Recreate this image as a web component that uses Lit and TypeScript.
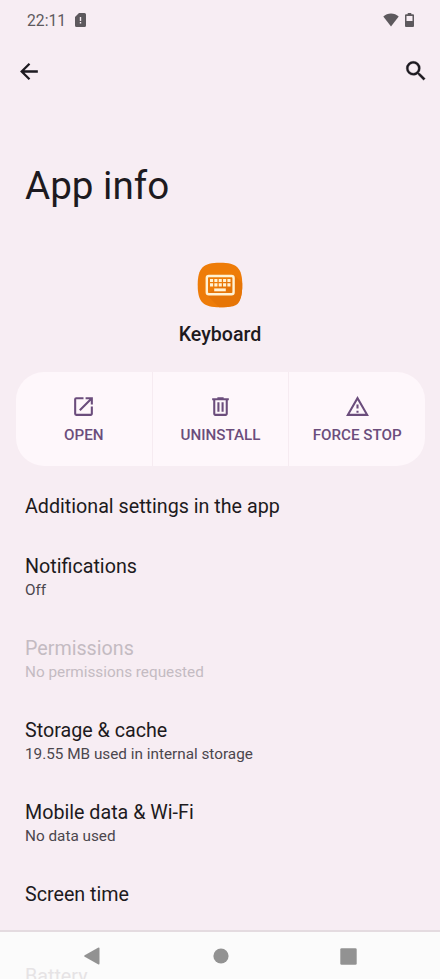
import { LitElement, html, css } from "lit";

const actions = [
  { label: "OPEN", path: "M19 19H5V5h7V3H5a2 2 0 0 0-2 2v14a2 2 0 0 0 2 2h14c1.1 0 2-.9 2-2v-7h-2v7zM14 3v2h3.59l-9.83 9.83 1.41 1.41L19 6.41V10h2V3h-7z" },
  { label: "UNINSTALL", path: "M15 4V3H9v1H4v2h1v13c0 1.1.9 2 2 2h10c1.1 0 2-.9 2-2V6h1V4h-5zm2 15H7V6h10v13zM9 8h2v9H9zm4 0h2v9h-2z" },
  { label: "FORCE STOP", path: "M12 5.99 19.53 19H4.47L12 5.99M12 2 1 21h22L12 2zm1 14h-2v2h2v-2zm0-6h-2v4h2v-4z" },
];

const rows: { title: string; summary?: string; off?: boolean }[] = [
  { title: "Additional settings in the app" },
  { title: "Notifications", summary: "Off" },
  { title: "Permissions", summary: "No permissions requested", off: true },
  { title: "Storage & cache", summary: "19.55 MB used in internal storage" },
  { title: "Mobile data & Wi-Fi", summary: "No data used" },
  { title: "Screen time" },
];

class AppRoot extends LitElement {
  static styles = css`
    :host { display: flex; flex-direction: column; width: 440px; height: 979px; overflow: hidden; background: #f7edf3; color: #1d1a20; font-family: Roboto, sans-serif; position: relative; }
    svg { display: block; flex: none; fill: currentColor; }
    .status { display: flex; align-items: center; height: 40px; padding: 0 26px 0 27px; color: #5d595d; font-size: 15.7px; flex: none; box-sizing: border-box; }
    .sim { margin-left: 9px; }
    .sp { flex: 1; }
    .wifi { margin-right: 6px; }
    .bar { display: flex; justify-content: space-between; align-items: center; height: 62px; padding: 0 11px 0 17px; flex: none; }
    h1 { margin: 60px 0 0 25px; font-size: 38.6px; line-height: 48px; font-weight: 400; flex: none; }
    .app { display: flex; flex-direction: column; align-items: center; margin-top: 51px; flex: none; }
    .name { margin-top: 14px; font-size: 19.6px; line-height: 24px; font-weight: 500; }
    .actions { display: flex; gap: 1px; margin: 25px 15px 0 16px; height: 94px; border-radius: 28px; overflow: hidden; flex: none; background: #f6ebf1; }
    .action { flex: 1; background: #fef7fb; color: #6b4d7c; display: flex; flex-direction: column; align-items: center; padding-top: 22px; font-size: 15.2px; line-height: 20px; font-weight: 500; gap: 6px; }
    .list { padding: 10px 0 0 25px; }
    .row { height: 81.8px; display: flex; flex-direction: column; justify-content: center; }
    .row.single { height: 61px; }
    .t { font-size: 19.7px; line-height: 25px; }
    .s { font-size: 15.3px; line-height: 22px; color: #4b464d; }
    .off .t, .off .s { color: #c4bbc2; }
    .nav { position: absolute; left: 0; right: 0; bottom: 0; height: 49px; box-sizing: border-box; border-top: 2px solid #e4dbe0; background: #fbfbfb; overflow: hidden; }
    .under { position: absolute; left: 25px; top: 32px; font-size: 19.7px; line-height: 25px; color: #e6e3e5; }
    .keys { position: relative; display: flex; justify-content: space-between; align-items: center; padding: 0 83px; height: 48px; color: #929292; }
  `;

  render() {
    return html`
      <div class="status">
        <span>22:11</span>
        <svg class="sim" width="11" height="14" viewBox="0 0 11 14"><path fill-rule="evenodd" d="M4 0h5.500Q11 0 11 1.500v11Q11 14 9.500 14h-8Q0 14 0 12.500V4zM4.800 4v4h1.400V4zm0 5v1.400h1.400V9z"/></svg>
        <span class="sp"></span>
        <svg class="wifi" width="16" height="14" viewBox="0 0 16 14"><path d="M.3 3.600C4.500-.5 11.500-.5 15.700 3.600L8 13.500z"/></svg>
        <svg width="9" height="14" viewBox="0 0 9 14"><path fill-rule="evenodd" d="M2.700 0h3.600v1.300H8q1 0 1 1V13q0 1-1 1H1q-1 0-1-1V2.300q0-1 1-1h1.700zM1.500 2.900v5h6v-5z"/></svg>
      </div>
      <div class="bar">
        <svg width="25" height="25" viewBox="0 0 24 24"><path d="M20 12H5M12 4.500 4.500 12l7.500 7.500" fill="none" stroke="currentColor" stroke-width="2.200"/></svg>
        <svg width="26" height="26" viewBox="0 0 24 24"><path stroke="currentColor" stroke-width=".3" d="M15.500 14h-.79l-.28-.27A6.470 6.470 0 0 0 16 9.500 6.500 6.500 0 1 0 9.500 16c1.610 0 3.090-.59 4.230-1.570l.27.28v.79l5 4.990L20.490 19l-4.990-5zm-6 0C7.010 14 5 11.990 5 9.500S7.010 5 9.500 5 14 7.010 14 9.500 11.990 14 9.500 14z"/></svg>
      </div>
      <h1>App info</h1>
      <div class="app">
        <svg width="48" height="48" viewBox="0 0 48 48">
          <path d="M24 1.700C41 1.700 46.300 7 46.300 24S41 46.300 24 46.300 1.700 41 1.700 24 7 1.700 24 1.700z" fill="#ee7c08"/>
          <path d="M38.500 14.500 46.200 22Q46.700 41 39.500 44.200 35 46.500 23 46.300L10.500 33.500z" fill="#e67506"/>
          <rect x="10.800" y="15" width="26.800" height="18.300" rx="2" fill="none" stroke="#fff2d4" stroke-width="2.400"/>
          <path d="M14 19.500h20.500M14 23.900h20.500" fill="none" stroke="#fff2d4" stroke-width="3.100" stroke-dasharray="3.100 1.250"/>
          <path d="M18.200 27.400h11.600v2.900H18.200z" fill="#fff2d4"/>
        </svg>
        <div class="name">Keyboard</div>
      </div>
      <div class="actions">
        ${actions.map((a) => html`<div class="action"><svg width="25" height="25" viewBox="0 0 24 24"><path d=${a.path} /></svg><span>${a.label}</span></div>`)}
      </div>
      <div class="list">
        ${rows.map((r) => html`<div class="row ${r.summary ? "" : "single"} ${r.off ? "off" : ""}">
          <div class="t">${r.title}</div>
          ${r.summary ? html`<div class="s">${r.summary}</div>` : ""}
        </div>`)}
      </div>
      <div class="nav">
        <div class="under">Battery</div>
        <div class="keys">
          <svg width="18" height="18" viewBox="0 0 18 18"><path d="M15 .7Q16.500 0 16.500 1.500v15q0 1.500-1.500.8L1.700 9.800q-1.300-.8 0-1.600z"/></svg>
          <svg width="16" height="16" viewBox="0 0 16 16"><circle cx="8" cy="8" r="7.600"/></svg>
          <svg width="17" height="17" viewBox="0 0 17 17"><rect x=".3" y=".3" width="16.400" height="16.400" rx="1.300"/></svg>
        </div>
      </div>`;
  }
}
customElements.define("app-root", AppRoot);
